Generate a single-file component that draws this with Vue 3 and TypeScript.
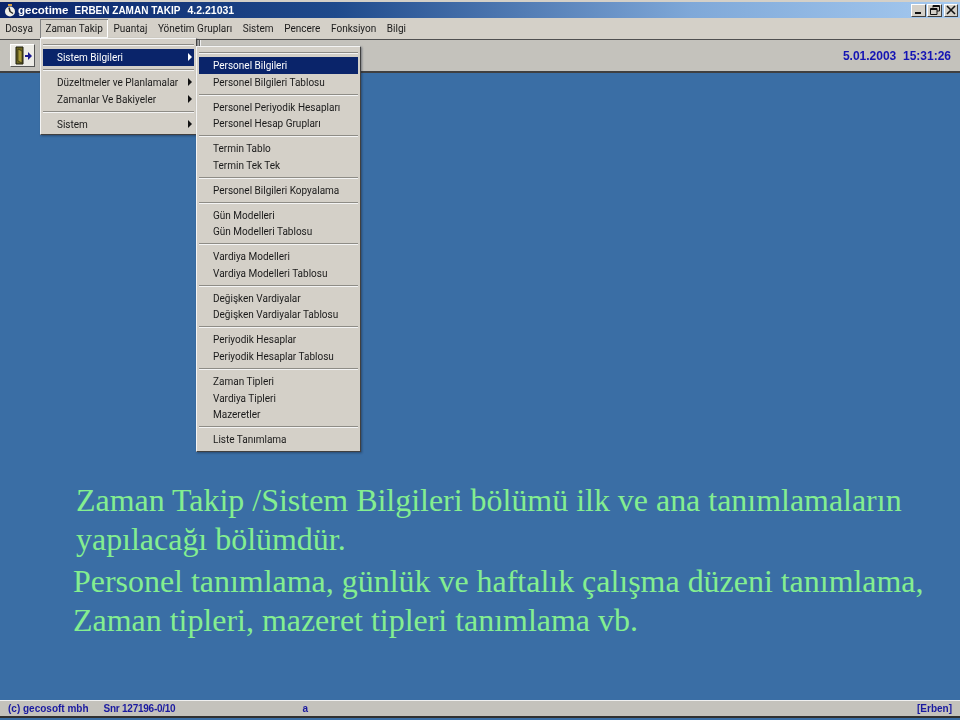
<script setup lang="ts">
type Entry = { label?: string; arrow?: boolean; active?: boolean; sep?: boolean }

const topMenu = ['Dosya', 'Zaman Takip', 'Puantaj', 'Yönetim Grupları', 'Sistem', 'Pencere', 'Fonksiyon', 'Bilgi']

const mainMenu: Entry[] = [
  { sep: true },
  { label: 'Sistem Bilgileri', arrow: true, active: true },
  { sep: true },
  { label: 'Düzeltmeler ve Planlamalar', arrow: true },
  { label: 'Zamanlar Ve Bakiyeler', arrow: true },
  { sep: true },
  { label: 'Sistem', arrow: true },
]

const groups = [
  ['Personel Bilgileri', 'Personel Bilgileri Tablosu'],
  ['Personel Periyodik Hesapları', 'Personel Hesap Grupları'],
  ['Termin Tablo', 'Termin Tek Tek'],
  ['Personel Bilgileri Kopyalama'],
  ['Gün Modelleri', 'Gün Modelleri Tablosu'],
  ['Vardiya Modelleri', 'Vardiya Modelleri Tablosu'],
  ['Değişken Vardiyalar', 'Değişken Vardiyalar Tablosu'],
  ['Periyodik Hesaplar', 'Periyodik Hesaplar Tablosu'],
  ['Zaman Tipleri', 'Vardiya Tipleri', 'Mazeretler'],
  ['Liste Tanımlama'],
]

const subMenu: Entry[] = [{ sep: true }]
groups.forEach((group, i) => {
  if (i > 0) subMenu.push({ sep: true })
  group.forEach((label) => subMenu.push({ label, active: label === 'Personel Bilgileri' }))
})
</script>

<template>
  <main class="screen">
    <header class="titlebar">
      <svg class="app-icon" width="12" height="13" viewBox="0 0 12 13">
        <circle cx="6" cy="7.5" r="5" fill="#f0efe8" />
        <path d="M6 7.5 L5 3.5 M6 7.5 L9 9.5" stroke="#222" stroke-width="1.5" />
        <path d="M4 1 h4" stroke="#d8a040" stroke-width="2" />
      </svg>
      <span class="title">
        <span class="app-name">gecotime</span>
        <span class="app-desc">ERBEN ZAMAN TAKIP</span>
        <span class="app-ver">4.2.21031</span>
      </span>
      <div class="win-buttons">
        <button type="button" class="win-btn">
          <svg width="10" height="10" viewBox="0 0 10 10"><path d="M1 7h6v2H1z" fill="#111" /></svg>
        </button>
        <button type="button" class="win-btn gap">
          <svg width="10" height="10" viewBox="0 0 10 10">
            <path d="M3 .5h6.5v5.5H7M3 .5v2M3 1.5h6" fill="none" stroke="#111" />
            <path d="M.5 3.5h6.5v6H.5zM.5 4.5h6.5" fill="none" stroke="#111" />
          </svg>
        </button>
        <button type="button" class="win-btn close">
          <svg width="10" height="10" viewBox="0 0 10 10"><path d="M1 1l8 8M9 1l-8 8" stroke="#111" stroke-width="1.6" /></svg>
        </button>
      </div>
    </header>

    <nav class="menubar">
      <span v-for="item in topMenu" :key="item" class="menu-item" :class="{ open: item === 'Zaman Takip' }">{{ item }}</span>
    </nav>

    <div class="toolbar">
      <button type="button" class="tool-btn">
        <svg width="18" height="20" viewBox="0 0 18 20">
          <path d="M2 1h7v17H2z" fill="#6b6420" stroke="#1c1c10" />
          <path d="M4 3l4 2v12l-4-2z" fill="#a89a38" stroke="#1c1c10" stroke-width=".6" />
          <path d="M11 9h3V6l4 4-4 4v-3h-3z" fill="#1a1a90" />
        </svg>
      </button>
      <span class="groove"></span>
      <span class="field"></span>
      <span class="clock">5.01.2003&nbsp;&nbsp;15:31:26</span>
    </div>

    <section class="desktop">
      <p class="note first">Zaman Takip /Sistem Bilgileri bölümü ilk ve ana tanımlamaların<br />yapılacağı bölümdür.</p>
      <p class="note second">Personel tanımlama, günlük ve haftalık çalışma düzeni tanımlama,<br />Zaman tipleri, mazeret tipleri tanımlama vb.</p>
    </section>

    <footer class="statusbar">
      <span class="st-copy">(c) gecosoft mbh</span>
      <span class="st-serial">Snr 127196-0/10</span>
      <span class="st-user">a</span>
      <span class="st-name">[Erben]</span>
    </footer>

    <ul class="popup main-popup">
      <template v-for="(entry, i) in mainMenu" :key="i">
        <li v-if="entry.sep" class="sep"></li>
        <li v-else class="row" :class="{ active: entry.active }">
          <span>{{ entry.label }}</span>
          <i v-if="entry.arrow" class="arrow"></i>
        </li>
      </template>
    </ul>

    <ul class="popup sub-popup">
      <template v-for="(entry, i) in subMenu" :key="i">
        <li v-if="entry.sep" class="sep"></li>
        <li v-else class="row" :class="{ active: entry.active }">
          <span>{{ entry.label }}</span>
        </li>
      </template>
    </ul>
  </main>
</template>

<style scoped>
.screen {
  position: relative;
  width: 960px;
  height: 720px;
  display: flex;
  flex-direction: column;
  overflow: hidden;
  background: #3a6ea5;
  font-family: Roboto, 'Liberation Sans', Arial, sans-serif;
}

.titlebar {
  height: 18px;
  flex: none;
  display: flex;
  align-items: center;
  padding: 0 2px 0 4px;
  box-sizing: border-box;
  border-top: 2px solid #d4d0c8;
  background: linear-gradient(90deg, #0a246a 0%, #1f4a8c 35%, #7fa8d8 72%, #a6caf0 100%);
  color: #fff;
}

.app-icon {
  margin-right: 2px;
}

.title {
  display: flex;
  align-items: baseline;
  font-family: 'Liberation Sans', Arial, sans-serif;
  font-weight: 700;
  white-space: nowrap;
  filter: blur(0.3px);
}

.app-name {
  font-size: 11.5px;
}

.app-desc {
  margin-left: 6px;
  font-size: 10px;
}

.app-ver {
  margin-left: 7px;
  font-size: 10.5px;
}

.win-buttons {
  margin-left: auto;
  display: flex;
}

.win-btn {
  width: 15px;
  height: 13px;
  padding: 0;
  margin: 0;
  display: grid;
  place-items: center;
  background: #d4d0c8;
  border: 1px solid;
  border-color: #fff #404040 #404040 #fff;
}

.win-btn.gap {
  margin: 0 2px 0 1px;
}

.win-btn.close {
  width: 14px;
}

.menubar {
  height: 21px;
  flex: none;
  display: flex;
  align-items: center;
  box-sizing: border-box;
  background: #d4d0c8;
  font-size: 10px;
  color: #1a1a1a;
}

.menu-item {
  padding: 0 5.3px;
  height: 19px;
  line-height: 19px;
  white-space: nowrap;
  filter: blur(0.25px);
}

.menu-item.open {
  margin-left: 2px;
  box-shadow: inset 1px 1px 0 #808080, inset -1px -1px 0 #fff;
}

.toolbar {
  height: 34px;
  flex: none;
  display: flex;
  align-items: center;
  padding: 0 9px 0 10px;
  box-sizing: border-box;
  background: #c4c2bc;
  border-top: 1px solid #505050;
  border-bottom: 2px solid #404040;
}

.tool-btn {
  width: 25px;
  height: 23px;
  padding: 0;
  display: grid;
  place-items: center;
  background: #ecebe6;
  border: 1px solid;
  border-color: #fff #555 #555 #fff;
}

.groove {
  width: 1px;
  align-self: stretch;
  margin-left: 164px;
  background: #606060;
  box-shadow: 1px 0 0 #f0f0f0;
}

.field {
  width: 28px;
  height: 20px;
  margin-left: 4px;
  background: #f4f4f0;
}

.clock {
  margin-left: auto;
  font-size: 12px;
  font-family: 'Liberation Sans', Arial, sans-serif;
  font-weight: 700;
  color: #1414b4;
  white-space: nowrap;
  filter: blur(0.25px);
}

.desktop {
  flex: 1;
  min-height: 0;
  padding: 409px 0 0 76px;
  color: #84ee90;
  font-family: 'Liberation Serif', 'Times New Roman', serif;
  font-size: 31.95px;
  line-height: 38.5px;
}

.note {
  margin: 0;
  white-space: nowrap;
}

.note.second {
  margin: 4px 0 0 -3px;
}

.statusbar {
  height: 18px;
  flex: none;
  margin-bottom: 2px;
  display: flex;
  align-items: center;
  padding: 0 8px;
  box-sizing: border-box;
  background: #c4c2bc;
  border-top: 1px solid #f0f0f0;
  border-bottom: 2px solid #303030;
  color: #1a1aa0;
  font-family: 'Liberation Sans', Arial, sans-serif;
  font-size: 10px;
  font-weight: 700;
  white-space: nowrap;
}

.statusbar span {
  filter: blur(0.25px);
}

.st-serial {
  margin-left: 15px;
  letter-spacing: -0.25px;
}

.st-user {
  margin-left: 127px;
}

.st-name {
  margin-left: auto;
}

.popup {
  position: absolute;
  margin: 0;
  padding: 2px 2px;
  box-sizing: border-box;
  list-style: none;
  background: #d4d0c8;
  color: #1a1a1a;
  font-size: 10px;
  border: 1px solid;
  border-color: #f4f4f4 #404040 #404040 #f4f4f4;
  box-shadow: 1px 1px 2px rgba(20, 30, 50, 0.45);
}

.main-popup {
  left: 40px;
  top: 38px;
  width: 157px;
  height: 97px;
}

.sub-popup {
  left: 196px;
  top: 46px;
  width: 165px;
  height: 406px;
}

.row {
  position: relative;
  height: 16.6px;
  line-height: 16.6px;
  padding-left: 14px;
  white-space: nowrap;
}

.row span {
  display: block;
  padding-top: 0.6px;
  filter: blur(0.25px);
}

.row.active {
  background: #0a246a;
  color: #fff;
}

.sep {
  height: 8.4px;
  position: relative;
}

.sep::after {
  content: '';
  position: absolute;
  left: 0;
  right: 0;
  top: 3px;
  height: 1px;
  background: #8e8c86;
  box-shadow: 0 1px 0 #f4f4f4;
}

.arrow {
  position: absolute;
  right: 2px;
  top: 4px;
  border-left: 4px solid #111;
  border-top: 4px solid transparent;
  border-bottom: 4px solid transparent;
}

.row.active .arrow {
  border-left-color: #fff;
}
</style>
